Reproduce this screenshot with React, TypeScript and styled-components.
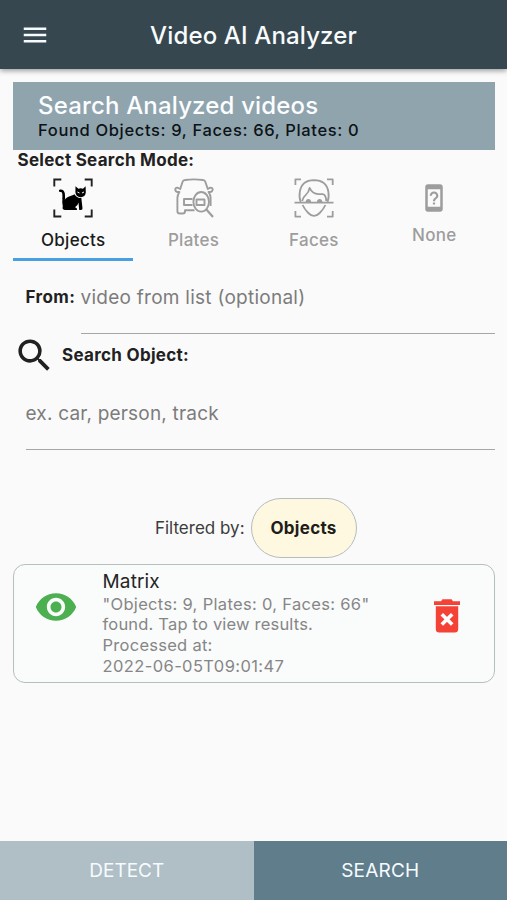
import React from "react";
import styled, { createGlobalStyle } from "styled-components";
import { MdMenu, MdSearch, MdVisibility, MdDeviceUnknown } from "react-icons/md";

const GlobalStyle = createGlobalStyle`
  * { box-sizing: border-box; }
  body { margin: 0; background: #fafafa; font-family: Inter, "Liberation Sans", sans-serif; color: #212121; }
`;

const Screen = styled.div`
  width: 100%;
  height: 900px;
  display: flex;
  flex-direction: column;
  background: #fafafa;
  overflow: hidden;
`;

const AppBar = styled.header`
  flex: none;
  height: 69px;
  padding: 1px 20px 0;
  display: grid;
  grid-template-columns: 30px 1fr 30px;
  align-items: center;
  background: #37474f;
  color: #f7fbfd;
  box-shadow: 0 2px 5px rgba(0, 0, 0, 0.36);
`;

const Title = styled.h1`
  margin: 0;
  padding-top: 1px;
  text-align: center;
  font-size: 24px;
  font-weight: 500;
  letter-spacing: 0.15px;
  line-height: 30px;
`;

const Content = styled.main`
  flex: 1;
  padding: 12.5px 12.5px 0 13px;
`;

const Banner = styled.section`
  height: 68px;
  padding: 9px 25px 0;
  background: #90a4ae;
`;

const BannerTitle = styled.h2`
  margin: 0;
  color: #fbfdff;
  font-size: 24px;
  font-weight: 500;
  letter-spacing: 0.17px;
  line-height: 29px;
`;

const BannerStats = styled.p`
  margin: 0;
  color: #0c1216;
  font-size: 16.5px;
  font-weight: 500;
  letter-spacing: 0.65px;
  line-height: 20px;
`;

const Label = styled.span<{ $spacing?: number }>`
  font-size: 17px;
  font-weight: 700;
  line-height: 20px;
  letter-spacing: ${(p) => p.$spacing ?? 0.3}px;
`;

const ModeHeading = styled.div`
  height: 21px;
  padding-left: 4.5px;
  display: flex;
  align-items: center;
`;

const Tabs = styled.nav`
  display: grid;
  grid-template-columns: repeat(4, 1fr);
  height: 90px;
`;

const Tab = styled.div<{ $active?: boolean; $raised?: boolean }>`
  display: flex;
  flex-direction: column;
  align-items: center;
  padding-top: ${(p) => (p.$raised ? 12 : 7)}px;
  gap: ${(p) => (p.$raised ? 12.6 : 12)}px;
  color: ${(p) => (p.$active ? "#1b1b1b" : "#9d9d9d")};
  border-bottom: 3px solid ${(p) => (p.$active ? "#4a9fe0" : "transparent")};
  svg { flex: none; display: block; }
`;

const TabLabel = styled.span`
  font-size: 17px;
  font-weight: 500;
  line-height: 20px;
  letter-spacing: 0.28px;
`;

const FromRow = styled.div`
  display: flex;
  padding-left: 12.5px;
  height: 73px;
`;

const FromLabel = styled.div`
  width: 55px;
  padding-top: 26px;
  line-height: 20px;
`;

const Field = styled.div<{ $spacing: number }>`
  flex: 1;
  padding-top: 25px;
  border-bottom: 1px solid #a6a6a6;
  color: #7c7c7c;
  font-size: 19px;
  line-height: 24px;
  letter-spacing: ${(p) => p.$spacing}px;
`;

const SearchHeading = styled.div`
  height: 43px;
  display: flex;
  align-items: center;
  gap: 6px;
`;

const SearchField = styled.div`
  display: flex;
  height: 73px;
  padding-left: 12.5px;
`;

const FilterRow = styled.div`
  margin-top: 48px;
  height: 60px;
  display: flex;
  align-items: center;
  justify-content: center;
  gap: 6px;
  padding-left: 4px;
  font-size: 17px;
  letter-spacing: 0;
  color: #3c3c3c;
`;

const Chip = styled.span`
  width: 106px;
  height: 60px;
  display: flex;
  align-items: center;
  justify-content: center;
  border: 1px solid #b4bcbf;
  border-radius: 30px;
  background: #fff8e1;
  color: #1e1d18;
  font-weight: 700;
  letter-spacing: 0.3px;
`;

const Card = styled.article`
  margin-top: 6px;
  height: 119px;
  display: grid;
  grid-template-columns: 88.5px 1fr 93px;
  border: 1px solid #b4bfbf;
  border-radius: 12px;
  background: #fafbfb;
`;

const ViewCell = styled.div`
  padding: 20.5px 0 0 20px;
`;

const DeleteCell = styled.div`
  display: flex;
  justify-content: center;
  align-items: flex-start;
  padding-top: 34.5px;
`;

const CardText = styled.div`
  padding-top: 5px;
  white-space: nowrap;
`;

const CardTitle = styled.h3`
  margin: 0;
  color: #252525;
  font-size: 19px;
  font-weight: 400;
  line-height: 24px;
  letter-spacing: 0.15px;
`;

const CardLine = styled.p<{ $spacing: number }>`
  margin: 0;
  color: #868686;
  font-size: 16.5px;
  line-height: 20.7px;
  letter-spacing: ${(p) => p.$spacing}px;
`;

const Footer = styled.footer`
  flex: none;
  height: 59px;
  display: grid;
  grid-template-columns: 1fr 1fr;
`;

const Action = styled.button<{ $primary?: boolean }>`
  border: 0;
  padding: 0 0 1px;
  background: ${(p) => (p.$primary ? "#607d8b" : "#b0bec5")};
  color: #f6fbff;
  font: 400 19px Inter, sans-serif;
  letter-spacing: ${(p) => (p.$primary ? 0.2 : 0)}px;
`;

const CatIcon = () => (
  <svg width="40" height="40" viewBox="0 0 40 40">
    <path d="M1.3 8.5V1.5H8.3M31.7 1.5H38.7V8.5M38.7 31.5V38.5H31.7M8.3 38.5H1.3V31.5" fill="none" stroke="#222" strokeWidth="1.9" />
    <path d="M7.2 12.8Q10.2 12.4 10.6 16L10.8 20.5" fill="none" stroke="#000" strokeWidth="2.6" strokeLinecap="round" />
    <path d="M9.6 19.5L12 21.5C14 18.5 18 18.3 21.5 16.3C23.5 19.5 26 20.5 28.3 19.8L29.5 30.3Q29.6 32 28 32H26.2L25.5 24.5Q24.8 28 22 29.2Q24.5 30 24 32H11.8Q8.8 31.5 9.8 28.5Q8.7 24.5 9.6 19.5Z" fill="#000" />
    <path d="M22.5 8.2L25.4 10.7Q27.7 9.9 30 10.7L32.6 8.2L32.8 14.5Q32.3 19 27.7 19.2Q22.6 18.8 22.4 14Z" fill="#000" />
    <path d="M24.4 14L26.5 15M31 14L29 15" stroke="#fafafa" strokeWidth="1" />
  </svg>
);

const PlateIcon = () => (
  <svg width="40" height="40" viewBox="0 0 40 40" fill="none" stroke="currentColor" strokeWidth="1.9" strokeLinejoin="round">
    <path d="M20.5 32.3H11V33.2Q11 35.5 8.7 35.5H6Q3.4 35.5 3.4 33.2V20Q3.4 17 5.4 14H3.4Q1.3 13.6 1.3 11.2Q1.5 9.4 3.5 9.7L6.2 11L8.7 3.5Q9.2 2.2 11 2Q20 .7 29 2Q30.7 2.2 31.2 3.5L33.8 11L36.2 9.7Q38.6 9.5 38.7 11.6Q38.5 13.6 36.5 14H34.5Q36.7 17 36.6 20V28" />
    <path d="M18.5 21H10V27H18.5M22.5 27V21.5H30.5V27H22.5Z" />
    <ellipse cx="27.2" cy="23.8" rx="7.8" ry="9.8" />
    <path d="M32.2 31.3L39 39" strokeWidth="2.2" />
  </svg>
);

const FaceIcon = () => (
  <svg width="40" height="40" viewBox="0 0 40 40" fill="none" stroke="currentColor" strokeWidth="1.8" strokeLinejoin="round">
    <path d="M1.4 7V1.4H7M33 1.4H38.7V7M38.7 33V38.6H33M7 38.6H1.4V33M.5 24.7H39.5" />
    <path d="M6.8 24Q4.9 20 5.8 14Q7.5 2.4 20 2.2Q32.7 2.4 34.4 14Q35.3 20 33.4 24" />
    <path d="M8.2 23Q8.7 19.5 11.4 17.4Q14.8 14.4 15.6 9.8Q18.2 15.6 24.5 16.2H28.8Q32 16.6 32.2 23" />
    <path d="M8.6 27Q10.4 31 14.3 35Q20 40.8 25.7 35Q29.6 31 31.4 27" />
    <path d="M11.5 24Q12 21 14.4 21Q16.8 21 17.2 24ZM22.8 24Q23.3 21 25.6 21Q28 21 28.5 24Z" fill="currentColor" stroke="none" />
  </svg>
);

const TrashIcon = () => (
  <svg width="26" height="34" viewBox="0 0 26 34">
    <path d="M0 2.2H7L8.5.3H17.5L19 2.2H26V6H0ZM1.8 7.3H24.2V30Q24.2 33.5 20.8 33.5H5.2Q1.8 33.5 1.8 30Z" fill="#f44336" />
    <path d="M7.8 15.2L18.2 25.6M18.2 15.2L7.8 25.6" stroke="#fff" strokeWidth="3.6" />
  </svg>
);

export default function App() {
  return (
    <>
      <GlobalStyle />
      <Screen>
        <AppBar>
          <MdMenu size={30} />
          <Title>Video AI Analyzer</Title>
        </AppBar>
        <Content>
          <Banner>
            <BannerTitle>Search Analyzed videos</BannerTitle>
            <BannerStats>Found Objects: 9, Faces: 66, Plates: 0</BannerStats>
          </Banner>
          <ModeHeading>
            <Label $spacing={0.28}>Select Search Mode:</Label>
          </ModeHeading>
          <Tabs>
            <Tab $active>
              <CatIcon />
              <TabLabel>Objects</TabLabel>
            </Tab>
            <Tab>
              <PlateIcon />
              <TabLabel>Plates</TabLabel>
            </Tab>
            <Tab>
              <FaceIcon />
              <TabLabel>Faces</TabLabel>
            </Tab>
            <Tab $raised>
              <MdDeviceUnknown size={30} />
              <TabLabel>None</TabLabel>
            </Tab>
          </Tabs>
          <FromRow>
            <FromLabel>
              <Label $spacing={0.4}>From:</Label>
            </FromLabel>
            <Field $spacing={0.26}>video from list (optional)</Field>
          </FromRow>
          <SearchHeading>
            <MdSearch size={43} />
            <Label>Search Object:</Label>
          </SearchHeading>
          <SearchField>
            <Field $spacing={0.2}>ex. car, person, track</Field>
          </SearchField>
          <FilterRow>
            <span>Filtered by:</span>
            <Chip>Objects</Chip>
          </FilterRow>
          <Card>
            <ViewCell>
              <MdVisibility size={44} color="#4caf50" />
            </ViewCell>
            <CardText>
              <CardTitle>Matrix</CardTitle>
              <CardLine $spacing={0.32}>"Objects: 9, Plates: 0, Faces: 66"</CardLine>
              <CardLine $spacing={0.19}>found. Tap to view results.</CardLine>
              <CardLine $spacing={0.27}>Processed at:</CardLine>
              <CardLine $spacing={0.4}>2022-06-05T09:01:47</CardLine>
            </CardText>
            <DeleteCell>
              <TrashIcon />
            </DeleteCell>
          </Card>
        </Content>
        <Footer>
          <Action>DETECT</Action>
          <Action $primary>SEARCH</Action>
        </Footer>
      </Screen>
    </>
  );
}
